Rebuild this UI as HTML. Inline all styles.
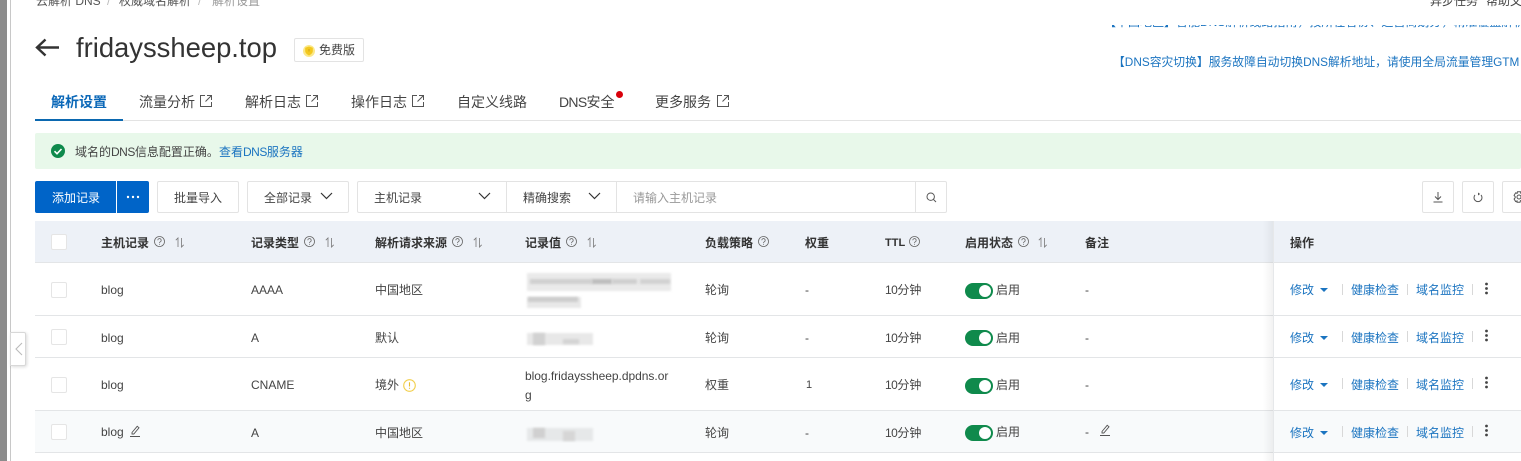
<!DOCTYPE html>
<html lang="zh-CN"><head><meta charset="utf-8"><title>解析设置</title>
<style>
html,body{margin:0;padding:0;background:#fff}
body{width:1521px;height:461px;overflow:hidden;position:relative;font-family:"Liberation Sans","Noto Sans CJK SC",sans-serif;font-size:12px;color:#333}
.a{position:absolute;white-space:nowrap}
.t{position:absolute;white-space:nowrap;line-height:16px}
.b{position:absolute;box-sizing:border-box;border:1px solid #e3e3e3;background:#fff;border-radius:2px}
.h{font-weight:700;color:#333;font-size:12px}
.l{color:#1b74c0}
.n{letter-spacing:-.5px}
.tab{position:absolute;top:93px;font-size:14px;line-height:18px;color:#444;white-space:nowrap}
svg{position:absolute;overflow:visible}
.blur{position:absolute;filter:blur(1px)}
.cb{position:absolute;left:51px;width:16px;height:16px;box-sizing:border-box;border:1px solid #e5e5e5;border-radius:2px;background:#fff}
.sw{position:absolute;left:965px;width:28px;height:16px;border-radius:8px;background:#0f8a4c}
.sw i{position:absolute;right:2px;top:2px;width:12px;height:12px;border-radius:50%;background:#fff}
.line{position:absolute;left:35px;width:1486px;height:1px;background:#e3e5e7}
</style></head><body>
<div class="a" style="left:0;top:0;width:7px;height:461px;background:#8c8c8c"></div>
<div class="a" style="left:10px;top:0;width:1px;height:461px;background:#c8c8c8"></div>

<div class="t" style="left:36px;top:-7px;color:#555">云解析 DNS</div>
<div class="t" style="left:107px;top:-7px;color:#bbb">/</div>
<div class="t" style="left:119px;top:-7px;color:#555">权威域名解析</div>
<div class="t" style="left:198px;top:-7px;color:#bbb">/</div>
<div class="t" style="left:212px;top:-7px;color:#999">解析设置</div>
<div class="t" style="left:1430px;top:-7px;color:#444">异步任务</div>
<div class="t" style="left:1486px;top:-7px;color:#444">帮助文档</div>

<svg style="left:35px;top:38px" width="25" height="20" viewBox="0 0 25 20"><path d="M24 9.500H2M10.500 1.500L2 9.500l8.500 8" fill="none" stroke="#333" stroke-width="2.400"/></svg>
<div class="t" style="left:76px;top:31px;font-size:27.400px;line-height:34px;color:#333">fridayssheep.top</div>
<div class="b" style="left:294px;top:38px;width:70px;height:24px"></div>
<svg style="left:303px;top:45px" width="12" height="12" viewBox="0 0 12 12"><circle cx="6" cy="6" r="6" fill="#fbe88a"/><path d="M6 1.500l3.800 1.200v3.300c0 2-1.800 3.500-3.800 4.500-2-1-3.800-2.500-3.800-4.500V2.700z" fill="#f3c81f"/><path d="M6 4v2.500" stroke="#c9970f" stroke-width=".8"/></svg>
<div class="t" style="left:319px;top:42px;color:#444">免费版</div>

<div class="tab" style="left:51px;color:#0b68b8;font-weight:700">解析设置</div>
<div class="tab" style="left:139px">流量分析</div>
<div class="tab" style="left:245px">解析日志</div>
<div class="tab" style="left:351px">操作日志</div>
<div class="tab" style="left:457px">自定义线路</div>
<div class="tab" style="left:559px"><span style="letter-spacing:-.7px">DNS</span>安全</div>
<div class="tab" style="left:655px">更多服务</div>
<svg style="left:200px;top:95px" width="12" height="12" viewBox="0 0 12 12"><path d="M5 .5H.5v11h11V7M7 .5h4.500V5M11.500.5L5.500 6.500" fill="none" stroke="#555"/></svg>
<svg style="left:306px;top:95px" width="12" height="12" viewBox="0 0 12 12"><path d="M5 .5H.5v11h11V7M7 .5h4.500V5M11.500.5L5.500 6.500" fill="none" stroke="#555"/></svg>
<svg style="left:412px;top:95px" width="12" height="12" viewBox="0 0 12 12"><path d="M5 .5H.5v11h11V7M7 .5h4.500V5M11.500.5L5.500 6.500" fill="none" stroke="#555"/></svg>
<svg style="left:717px;top:95px" width="12" height="12" viewBox="0 0 12 12"><path d="M5 .5H.5v11h11V7M7 .5h4.500V5M11.500.5L5.500 6.500" fill="none" stroke="#555"/></svg>
<div class="a" style="left:616px;top:91px;width:7px;height:7px;border-radius:50%;background:#d9000b"></div>
<div class="a" style="left:35px;top:120px;width:1486px;height:1px;background:#e3e3e3"></div>
<div class="a" style="left:35px;top:119px;width:88px;height:2px;background:#0b68b0"></div>

<div style="position:absolute;left:1104px;top:25px;width:417px;height:4px;overflow:hidden;filter:blur(.3px)"><div class="t" style="left:0;top:-11px;color:#1b74c0;font-size:12px">【中国地区】智能DNS解析线路指南，按所在省份、运营商划分，精准覆盖解析线路，详情了解更多</div></div>
<div class="t" style="left:1113px;top:54px;color:#1b74c0;font-size:11.800px;filter:blur(.3px)">【DNS容灾切换】服务故障自动切换DNS解析地址，请使用全局流量管理GTM</div>

<div class="a" style="left:35px;top:133px;width:1486px;height:36px;background:#e8f8ea;border-radius:2px"></div>
<svg style="left:51px;top:144px" width="14" height="14" viewBox="0 0 14 14"><circle cx="7" cy="7" r="7" fill="#0f8a4c"/><path d="M3.500 7.200l2.500 2.500 4.500-4.700" fill="none" stroke="#fff" stroke-width="1.600"/></svg>
<div class="t" style="left:75px;top:144px;color:#444"><span>域名的</span><span class="n">DNS</span><span>信息配置正确。</span></div>
<div class="t l" style="left:219px;top:144px"><span>查看</span><span class="n">DNS</span><span>服务器</span></div>

<div class="a" style="left:35px;top:181px;width:81px;height:32px;background:#0064c8;border-radius:2px 0 0 2px"></div>
<div class="t" style="left:52px;top:190px;color:#fff">添加记录</div>
<div class="a" style="left:117px;top:181px;width:32px;height:32px;background:#0064c8;border-radius:0 2px 2px 0"></div>
<svg style="left:126px;top:195px" width="14" height="4"><circle cx="2" cy="2" r="1.200" fill="#fff"/><circle cx="7" cy="2" r="1.200" fill="#fff"/><circle cx="12" cy="2" r="1.200" fill="#fff"/></svg>
<div class="b" style="left:157px;top:181px;width:82px;height:32px"></div>
<div class="t" style="left:174px;top:190px;color:#444">批量导入</div>
<div class="b" style="left:247px;top:181px;width:102px;height:32px"></div>
<div class="t" style="left:264px;top:190px;color:#444">全部记录</div>
<svg style="left:320px;top:192px" width="13" height="8"><path d="M1 1l5.500 5.500L12 1" fill="none" stroke="#333" stroke-width="1.200"/></svg>
<div class="b" style="left:357px;top:181px;width:150px;height:32px;border-radius:2px 0 0 2px"></div>
<div class="t" style="left:374px;top:190px;color:#444">主机记录</div>
<svg style="left:478px;top:192px" width="13" height="8"><path d="M1 1l5.500 5.500L12 1" fill="none" stroke="#333" stroke-width="1.200"/></svg>
<div class="b" style="left:506px;top:181px;width:111px;height:32px;border-radius:0"></div>
<div class="t" style="left:523px;top:190px;color:#444">精确搜索</div>
<svg style="left:588px;top:192px" width="13" height="8"><path d="M1 1l5.500 5.500L12 1" fill="none" stroke="#333" stroke-width="1.200"/></svg>
<div class="b" style="left:616px;top:181px;width:300px;height:32px;border-radius:0"></div>
<div class="t" style="left:633px;top:190px;color:#999">请输入主机记录</div>
<div class="b" style="left:915px;top:181px;width:32px;height:32px;border-radius:0 2px 2px 0"></div>
<svg style="left:926px;top:192px" width="11" height="11" viewBox="0 0 11 11"><circle cx="4.700" cy="4.700" r="3.700" fill="none" stroke="#555"/><path d="M7.500 7.500l2.500 2.500" stroke="#555"/></svg>
<div class="b" style="left:1422px;top:181px;width:32px;height:32px"></div>
<svg style="left:1432px;top:191px" width="12" height="12" viewBox="0 0 12 12"><path d="M6 1v7.500M3 5.500L6 8.500l3-3M1.500 11h9" fill="none" stroke="#555"/></svg>
<div class="b" style="left:1462px;top:181px;width:32px;height:32px"></div>
<svg style="left:1473px;top:192px" width="10" height="11" viewBox="0 0 10 11"><path d="M2 3A4 4 0 1 0 8 3" fill="none" stroke="#555"/><path d="M5 .5L7.200 2 5 3.500z" fill="#555"/></svg>
<div class="b" style="left:1502px;top:181px;width:32px;height:32px"></div>
<svg style="left:1513px;top:191px" width="12" height="12" viewBox="0 0 12 12"><circle cx="6" cy="6" r="2" fill="none" stroke="#555"/><path d="M4.500.8h3l.4 1.600 1.500-.5 1.500 2.500L9.300 5.600v.8l1.100 1.200-1.500 2.500-1.500-.5-.4 1.600h-3L4.100 10l-1.500.5L1.100 8l1.100-1.300v-1L1.100 4.400l1.500-2.500 1.500.5z" fill="none" stroke="#555"/></svg>

<div class="a" style="left:35px;top:221px;width:1486px;height:41px;background:#edf1f7"></div>
<div class="line" style="top:262px"></div>
<div class="a" style="left:35px;top:410px;width:1486px;height:42px;background:#f8fafb"></div>
<div class="line" style="top:315px"></div>
<div class="line" style="top:357px"></div>
<div class="line" style="top:410px"></div>
<div class="line" style="top:452px"></div>

<div class="cb" style="top:234px"></div>
<div class="cb" style="top:282px"></div>
<div class="cb" style="top:329px"></div>
<div class="cb" style="top:377px"></div>
<div class="cb" style="top:424px"></div>

<div class="t h" style="left:101px;top:235px">主机记录</div>
<div class="t h" style="left:251px;top:235px">记录类型</div>
<div class="t h" style="left:375px;top:235px">解析请求来源</div>
<div class="t h" style="left:525px;top:235px">记录值</div>
<div class="t h" style="left:705px;top:235px">负载策略</div>
<div class="t h" style="left:805px;top:235px">权重</div>
<div class="t h" style="left:885px;top:235px;font-size:11px">TTL</div>
<div class="t h" style="left:965px;top:235px">启用状态</div>
<div class="t h" style="left:1085px;top:235px">备注</div>
<div class="t h" style="left:1290px;top:235px">操作</div>

<svg width="0" height="0" style="left:0;top:0"><defs>
<g id="q"><circle cx="5.500" cy="5.500" r="5" fill="none" stroke="#666" stroke-width=".8"/><path d="M3.800 4.300a1.700 1.700 0 1 1 2.600 1.400c-.6.400-.9.700-.9 1.300" fill="none" stroke="#666" stroke-width=".8"/><circle cx="5.500" cy="8.300" r=".5" fill="#666"/></g>
<g id="s"><path d="M3 9V0L.8 2.200M6.500 0v9l2.200-2.200" fill="none" stroke="#777" stroke-width=".8"/></g>
<g id="p"><path d="M3 7.500L8.200 1.300l1.800 1.500L4.800 9H3zM1 11.500h10" fill="none" stroke="#555" stroke-width=".9"/></g>
<g id="m"><path d="M0 0h8L4 4z" fill="#1b74c0"/></g>
</defs></svg>
<svg style="left:154px;top:236px" width="11" height="11"><use href="#q"/></svg>
<svg style="left:175px;top:238px" width="10" height="10"><use href="#s"/></svg>
<svg style="left:304px;top:236px" width="11" height="11"><use href="#q"/></svg>
<svg style="left:325px;top:238px" width="10" height="10"><use href="#s"/></svg>
<svg style="left:452px;top:236px" width="11" height="11"><use href="#q"/></svg>
<svg style="left:473px;top:238px" width="10" height="10"><use href="#s"/></svg>
<svg style="left:566px;top:236px" width="11" height="11"><use href="#q"/></svg>
<svg style="left:587px;top:238px" width="10" height="10"><use href="#s"/></svg>
<svg style="left:758px;top:236px" width="11" height="11"><use href="#q"/></svg>
<svg style="left:909px;top:236px" width="11" height="11"><use href="#q"/></svg>
<svg style="left:1018px;top:236px" width="11" height="11"><use href="#q"/></svg>
<svg style="left:1038px;top:238px" width="10" height="10"><use href="#s"/></svg>

<div class="t" style="left:101px;top:282px;color:#444">blog</div>
<div class="t" style="left:251px;top:282px;color:#444">AAAA</div>
<div class="t" style="left:375px;top:282px;color:#444">中国地区</div>
<div class="blur" style="left:527px;top:273px;width:144px;height:18px;background:#eaeaea"></div>
<div class="blur" style="left:530px;top:279px;width:62px;height:5px;background:#d0d0d0"></div>
<div class="blur" style="left:592px;top:279px;width:20px;height:5px;background:#bdbdbd"></div>
<div class="blur" style="left:612px;top:279px;width:25px;height:5px;background:#cfcfcf"></div>
<div class="blur" style="left:640px;top:279px;width:30px;height:5px;background:#d2d2d2"></div>
<div class="blur" style="left:527px;top:297px;width:54px;height:11px;background:#e8e8e8"></div>
<div class="blur" style="left:528px;top:297px;width:50px;height:5px;background:#cdcdcd"></div>
<div class="t" style="left:705px;top:282px;color:#444">轮询</div>
<div class="t" style="left:805px;top:282px;color:#444">-</div>
<div class="t" style="left:885px;top:282px;color:#444"><span class="n">10</span>分钟</div>
<div class="sw" style="top:283px"><i></i></div>
<div class="t" style="left:996px;top:282px;color:#444">启用</div>
<div class="t" style="left:1085px;top:282px;color:#444">-</div>

<div class="t" style="left:101px;top:330px;color:#444">blog</div>
<div class="t" style="left:251px;top:330px;color:#444">A</div>
<div class="t" style="left:375px;top:330px;color:#444">默认</div>
<div class="blur" style="left:527px;top:333px;width:66px;height:12px;background:#e8e8e8"></div>
<div class="blur" style="left:533px;top:333px;width:12px;height:12px;background:#d2d2d2"></div>
<div class="blur" style="left:563px;top:339px;width:16px;height:5px;background:#d4d4d4"></div>
<div class="t" style="left:705px;top:330px;color:#444">轮询</div>
<div class="t" style="left:805px;top:330px;color:#444">-</div>
<div class="t" style="left:885px;top:330px;color:#444"><span class="n">10</span>分钟</div>
<div class="sw" style="top:330px"><i></i></div>
<div class="t" style="left:996px;top:330px;color:#444">启用</div>
<div class="t" style="left:1085px;top:330px;color:#444">-</div>

<div class="t" style="left:101px;top:377px;color:#444">blog</div>
<div class="t" style="left:251px;top:377px;color:#444">CNAME</div>
<div class="t" style="left:375px;top:377px;color:#444">境外</div>
<svg style="left:403px;top:379px" width="13" height="13" viewBox="0 0 13 13"><circle cx="6.500" cy="6.500" r="5.800" fill="none" stroke="#f2d04f" stroke-width="1.100"/><path d="M6.500 3.300v4.200M6.500 8.800v1" stroke="#e8bd2e" stroke-width="1.100"/></svg>
<div class="t" style="left:525px;top:368px;color:#444;letter-spacing:-.03px">blog.fridayssheep.dpdns.or</div>
<div class="t" style="left:525px;top:387px;color:#444">g</div>
<div class="t" style="left:705px;top:377px;color:#444">权重</div>
<div class="t" style="left:806px;top:377px;color:#444;font-size:11px">1</div>
<div class="t" style="left:885px;top:377px;color:#444"><span class="n">10</span>分钟</div>
<div class="sw" style="top:378px"><i></i></div>
<div class="t" style="left:996px;top:377px;color:#444">启用</div>
<div class="t" style="left:1085px;top:377px;color:#444">-</div>

<div class="t" style="left:101px;top:424px;color:#444">blog</div>
<svg style="left:129px;top:425px" width="12" height="12"><use href="#p"/></svg>
<div class="t" style="left:251px;top:425px;color:#444">A</div>
<div class="t" style="left:375px;top:425px;color:#444">中国地区</div>
<div class="blur" style="left:527px;top:428px;width:66px;height:13px;background:#e6e8e9"></div>
<div class="blur" style="left:533px;top:428px;width:12px;height:10px;background:#d0d0d0"></div>
<div class="blur" style="left:563px;top:431px;width:12px;height:10px;background:#d6d6d6"></div>
<div class="t" style="left:705px;top:425px;color:#444">轮询</div>
<div class="t" style="left:805px;top:425px;color:#444">-</div>
<div class="t" style="left:885px;top:425px;color:#444"><span class="n">10</span>分钟</div>
<div class="sw" style="top:425px"><i></i></div>
<div class="t" style="left:996px;top:424px;color:#444">启用</div>
<div class="t" style="left:1085px;top:424px;color:#444">-</div>
<svg style="left:1099px;top:424px" width="12" height="12"><use href="#p"/></svg>

<div class="a" style="left:1263px;top:221px;width:10px;height:240px;background:linear-gradient(to right,rgba(0,0,0,0),rgba(0,0,0,.05))"></div>
<div class="a" style="left:1273px;top:221px;width:1px;height:240px;background:#e6e8ea"></div>

<div class="t l" style="left:1290px;top:282px">修改</div><svg style="left:1320px;top:288px" width="8" height="4"><use href="#m"/></svg>
<div class="a" style="left:1342px;top:284px;width:1px;height:11px;background:#d8d8d8"></div>
<div class="t l" style="left:1351px;top:282px">健康检查</div>
<div class="a" style="left:1407px;top:284px;width:1px;height:11px;background:#d8d8d8"></div>
<div class="t l" style="left:1416px;top:282px">域名监控</div>
<div class="a" style="left:1472px;top:284px;width:1px;height:11px;background:#d8d8d8"></div>
<svg style="left:1484px;top:282px" width="5" height="13"><circle cx="2.500" cy="2" r="1.400" fill="#444"/><circle cx="2.500" cy="6.500" r="1.400" fill="#444"/><circle cx="2.500" cy="11" r="1.400" fill="#444"/></svg>

<div class="t l" style="left:1290px;top:330px">修改</div><svg style="left:1320px;top:336px" width="8" height="4"><use href="#m"/></svg>
<div class="a" style="left:1342px;top:331px;width:1px;height:11px;background:#d8d8d8"></div>
<div class="t l" style="left:1351px;top:330px">健康检查</div>
<div class="a" style="left:1407px;top:331px;width:1px;height:11px;background:#d8d8d8"></div>
<div class="t l" style="left:1416px;top:330px">域名监控</div>
<div class="a" style="left:1472px;top:331px;width:1px;height:11px;background:#d8d8d8"></div>
<svg style="left:1484px;top:329px" width="5" height="13"><circle cx="2.500" cy="2" r="1.400" fill="#444"/><circle cx="2.500" cy="6.500" r="1.400" fill="#444"/><circle cx="2.500" cy="11" r="1.400" fill="#444"/></svg>

<div class="t l" style="left:1290px;top:377px">修改</div><svg style="left:1320px;top:383px" width="8" height="4"><use href="#m"/></svg>
<div class="a" style="left:1342px;top:378px;width:1px;height:11px;background:#d8d8d8"></div>
<div class="t l" style="left:1351px;top:377px">健康检查</div>
<div class="a" style="left:1407px;top:378px;width:1px;height:11px;background:#d8d8d8"></div>
<div class="t l" style="left:1416px;top:377px">域名监控</div>
<div class="a" style="left:1472px;top:378px;width:1px;height:11px;background:#d8d8d8"></div>
<svg style="left:1484px;top:376px" width="5" height="13"><circle cx="2.500" cy="2" r="1.400" fill="#444"/><circle cx="2.500" cy="6.500" r="1.400" fill="#444"/><circle cx="2.500" cy="11" r="1.400" fill="#444"/></svg>

<div class="t l" style="left:1290px;top:425px">修改</div><svg style="left:1320px;top:431px" width="8" height="4"><use href="#m"/></svg>
<div class="a" style="left:1342px;top:426px;width:1px;height:11px;background:#d8d8d8"></div>
<div class="t l" style="left:1351px;top:425px">健康检查</div>
<div class="a" style="left:1407px;top:426px;width:1px;height:11px;background:#d8d8d8"></div>
<div class="t l" style="left:1416px;top:425px">域名监控</div>
<div class="a" style="left:1472px;top:426px;width:1px;height:11px;background:#d8d8d8"></div>
<svg style="left:1484px;top:424px" width="5" height="13"><circle cx="2.500" cy="2" r="1.400" fill="#444"/><circle cx="2.500" cy="6.500" r="1.400" fill="#444"/><circle cx="2.500" cy="11" r="1.400" fill="#444"/></svg>

<div class="a" style="left:10px;top:332px;width:16px;height:34px;box-sizing:border-box;background:#fff;border:1px solid #d8d8d8;border-radius:0 2px 2px 0;box-shadow:1px 1px 3px rgba(0,0,0,.15)"></div>
<svg style="left:15px;top:342px" width="8" height="14"><path d="M7 1L1 7l6 6" fill="none" stroke="#bbb" stroke-width="1.100"/></svg>
</body></html>
